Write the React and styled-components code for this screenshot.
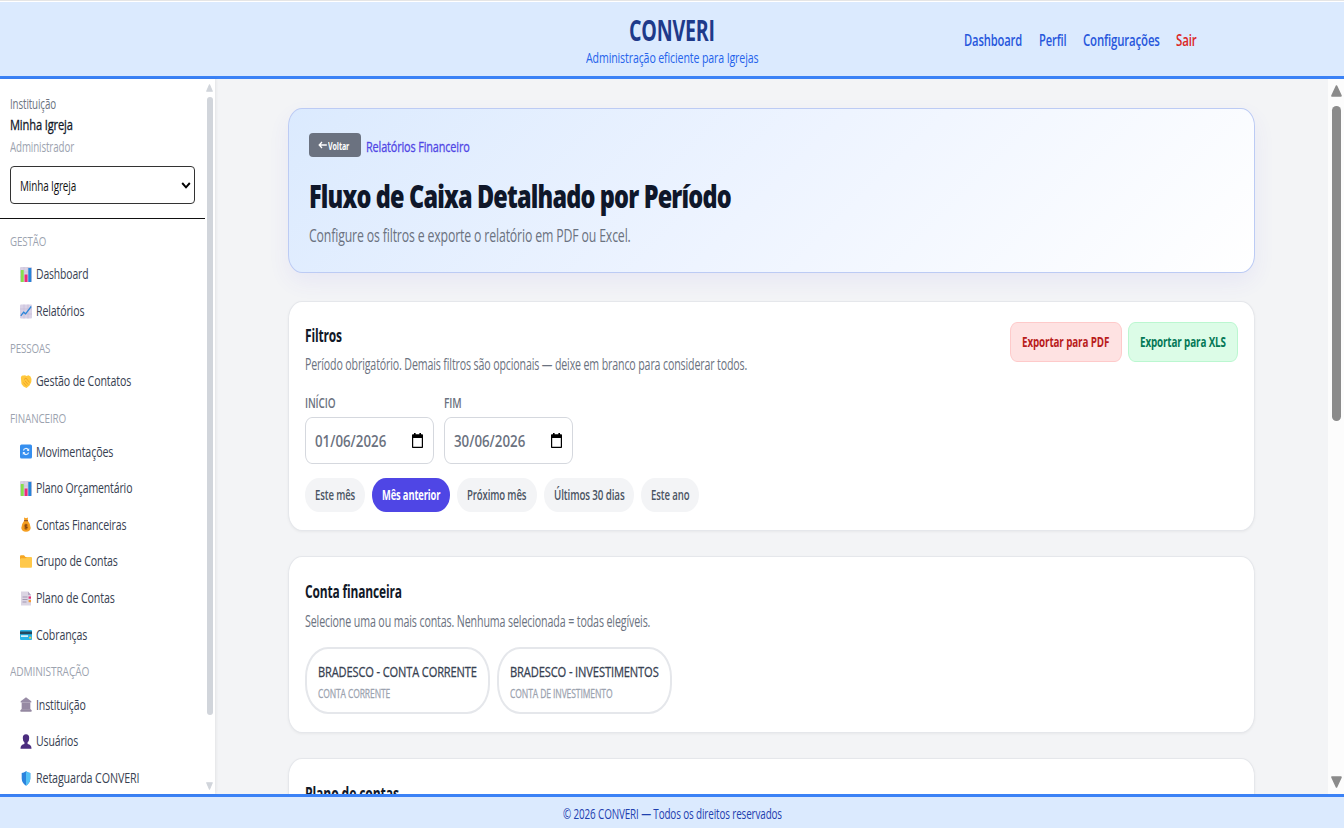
import React, { useLayoutEffect, useRef, useState } from "react";
import styled, { createGlobalStyle } from "styled-components";

const Global = createGlobalStyle`
  * { box-sizing: border-box; }
  body {
    margin: 0;
    background: #fff;
    font-family: "Open Sans", "Noto Sans", sans-serif;
    overflow: hidden;
  }
  button { font: inherit; border: 0; padding: 0; margin: 0; }
`;

/* Condensed text: the label is squeezed to the width its slot allows. */
const Slot = styled.span`
  display: block;
  flex: none;
  width: ${(p) => p.$w}px;
  height: ${(p) => p.$h}px;
  line-height: ${(p) => p.$h}px;
  font-size: ${(p) => p.$size}px;
  font-weight: ${(p) => p.$weight || 400};
  letter-spacing: ${(p) => p.$track}em;
  -webkit-text-stroke: ${(p) => (p.$weight === 500 ? "0.3px" : "0")};
  color: ${(p) => p.$color};
  white-space: nowrap;
`;
const Squeezed = styled.span`
  display: inline-block;
  transform-origin: 0 50%;
  vertical-align: top;
`;

function Label({ w, h = 20, size, weight, color, track = -0.012, children }) {
  const ref = useRef(null);
  const [scale, setScale] = useState(1);
  useLayoutEffect(() => {
    setScale(w / ref.current.offsetWidth);
  }, [w, size, weight, track]);
  return (
    <Slot $w={w} $h={h} $size={size} $weight={weight} $color={color} $track={track}>
      <Squeezed ref={ref} style={{ transform: `scaleX(${scale})` }}>{children}</Squeezed>
    </Slot>
  );
}

const Page = styled.div`
  display: flex;
  flex-direction: column;
  width: 1344px;
  height: 828px;
  border-top: 1px solid #e5e5e5;
  padding-top: 1px;
`;
const Header = styled.header`
  display: grid;
  grid-template-columns: 1fr auto 1fr;
  height: 77px;
  flex: none;
  background: #dbeafe;
  border-bottom: 3px solid #3b82f6;
`;
const Brand = styled.div`
  grid-column: 2;
  display: flex;
  flex-direction: column;
  align-items: center;
  padding-top: 11px;
`;
const TopNav = styled.nav`
  display: flex;
  gap: 16.8px;
  padding: 28px 0 0 205.5px;
`;
const Body = styled.div`
  display: flex;
  flex: 1;
  min-height: 0;
`;
const Sidebar = styled.aside`
  display: flex;
  width: 215px;
  flex: none;
  background: #fff;
  box-shadow: 1px 0 3px rgba(0, 0, 0, 0.07);
  z-index: 1;
  overflow: hidden;
`;
const SideContent = styled.div`
  width: 204.5px;
  flex: none;
`;
const Church = styled.div`
  height: 140px;
  padding: 15px 9.5px 0 9.5px;
  border-bottom: 1px solid #111;
`;
const Select = styled.div`
  display: flex;
  align-items: center;
  justify-content: space-between;
  height: 38px;
  margin-top: 8px;
  padding: 2px 3.5px 0 9.5px;
  border: 1px solid #333;
  border-radius: 4px;
`;
const Menu = styled.nav`
  padding-top: 3px;
`;
const Group = styled.section`
  padding: 5px 0 0 9.5px;
`;
const MenuItem = styled.a`
  display: flex;
  align-items: center;
  gap: 4.3px;
  height: 36.6px;
  padding: 0 0 1px 10.5px;
`;
const EmojiBox = styled.svg`
  width: 12px;
  height: 15px;
  margin-top: 2px;
  flex: none;
`;
const SideScroll = styled.div`
  display: flex;
  flex-direction: column;
  align-items: center;
  width: 10.5px;
  padding-top: 5px;
`;
const Thumb = styled.div`
  width: ${(p) => p.$w}px;
  height: ${(p) => p.$h}px;
  margin: ${(p) => p.$m};
  border-radius: 5px;
  background: ${(p) => p.$c};
  flex: none;
`;
const Main = styled.main`
  flex: 1;
  background: #f3f4f6;
  padding: 29px 73px 0;
  overflow: hidden;
`;
const MainScroll = styled.div`
  display: flex;
  flex-direction: column;
  align-items: center;
  width: 16px;
  background: #fcfcfc;
  padding-top: 6px;
`;
const Hero = styled.section`
  height: 165px;
  width: 967px;
  padding: 24px 19.5px 0;
  border: 1px solid #bccbf4;
  border-radius: 14px / 18px;
  background: linear-gradient(135deg, #dbeafe 0%, #eef4ff 50%, #ffffff 100%);
  box-shadow: 0 9px 22px rgba(79, 70, 229, 0.07);
`;
const Crumb = styled.div`
  display: flex;
  gap: 5px;
  height: 24px;
  margin-bottom: 19px;
`;
const Back = styled.button`
  width: 52.5px;
  height: 24px;
  padding: 0 0 0 9px;
  border-radius: 4px;
  background: #6b7280;
`;
const BackText = styled.span`
  display: flex;
  align-items: center;
  gap: 1px;
  height: 22px;
`;
const Card = styled.section`
  width: 967px;
  height: ${(p) => p.$h}px;
  margin-top: ${(p) => p.$mt}px;
  padding: ${(p) => p.$pt}px 16px 0 16px;
  background: #fff;
  border: 1px solid #e5e7eb;
  border-radius: 14px / 18px;
  box-shadow: 0 1px 3px rgba(0, 0, 0, 0.05);
`;
const CardHead = styled.div`
  display: flex;
  justify-content: space-between;
`;
const Titles = styled.div`
  display: flex;
  flex-direction: column;
  gap: ${(p) => p.$gap}px;
`;
const Actions = styled.div`
  display: flex;
  gap: 6.5px;
  margin-top: -3px;
`;
const ExportButton = styled.button`
  width: ${(p) => p.$w}px;
  height: 40px;
  padding: 0 0 0 11.3px;
  border: 1px solid ${(p) => p.$line};
  border-radius: 7px / 9px;
  background: ${(p) => p.$bg};
`;
const Dates = styled.div`
  display: flex;
  gap: 10.3px;
  margin-top: 19px;
`;
const DateInput = styled.div`
  display: flex;
  align-items: center;
  justify-content: space-between;
  width: 129px;
  height: 47px;
  margin-top: 4px;
  padding: 0 10px 0 8.5px;
  border: 1px solid #d5d8de;
  border-radius: 7px / 9px;
`;
const Chips = styled.div`
  display: flex;
  gap: 7.2px;
  margin-top: 14px;
`;
const Chip = styled.button`
  display: flex;
  align-items: center;
  height: 34px;
  padding: 0 9.8px;
  border-radius: 14px / 17px;
  background: ${(p) => (p.$on ? "#4f46e5" : "#f3f4f6")};
`;
const Accounts = styled.div`
  display: flex;
  gap: 6.5px;
  margin-top: 16px;
`;
const Account = styled.button`
  display: flex;
  flex-direction: column;
  height: 67px;
  width: ${(p) => p.$w}px;
  padding: 11px 0 0 11px;
  border: 2px solid #e5e7eb;
  border-radius: 23px / 30px;
  background: #fff;
`;
const Footer = styled.footer`
  display: flex;
  justify-content: center;
  height: 34px;
  flex: none;
  padding-top: 7px;
  background: #dbeafe;
  border-top: 3px solid #3b82f6;
`;

function Arrow({ down, w, h, color }) {
  return (
    <svg width={w} height={h} viewBox="0 0 10 10" preserveAspectRatio="none">
      <path
        d={down ? "M1 1H9L5 9Z" : "M1 9H9L5 1Z"}
        fill={color} stroke={color} strokeWidth="1.6" strokeLinejoin="round"
      />
    </svg>
  );
}

const Chevron = () => (
  <svg width="10" height="8" viewBox="0 0 10 8" fill="none">
    <path d="M1.2 1L5 5.3L8.8 1" stroke="#000" strokeWidth="1.9" />
  </svg>
);

const Calendar = () => (
  <svg width="11" height="15" viewBox="0 0 11 15">
    <path d="M1 1.3h1V0h1.6v1.3h3.8V0H9v1.3h1c.6 0 1 .5 1 1V14c0 .6-.4 1-1 1H1c-.6 0-1-.4-1-1V2.3c0-.5.4-1 1-1zM1.2 5v8.700h8.600V5z" fill="#000" fillRule="evenodd" />
  </svg>
);

const BackArrow = () => (
  <svg width="9" height="8" viewBox="0 0 9 8" fill="none">
    <path d="M8.8 4H1.2M4 1L1.2 4L4 7" stroke="#fff" strokeWidth="1.3" />
  </svg>
);

const emojis = {
  bars: (
    <>
      <rect width="12" height="15" rx="1" fill="#d9d1e3" />
      <path d="M0 5h12M0 10h12M4 0v15M8 0v15" stroke="#c2b8d0" strokeWidth=".5" />
      <rect x=".8" y="3" width="2.9" height="12" fill="#86e04b" />
      <rect x="4.6" y="7.5" width="2.9" height="7.5" fill="#ee2a7b" />
      <rect x="8.3" y="1" width="3" height="14" fill="#2683d8" />
    </>
  ),
  trend: (
    <>
      <rect y=".5" width="12" height="14" rx="1" fill="#d9d2e6" />
      <path d="M0 5h12M0 10h12M4 .5v14M8 .5v14" stroke="#c2b8d6" strokeWidth=".6" />
      <path d="M.8 11.8L3.6 8.2L5.6 9.8L11.2 2.5" fill="none" stroke="#2b86d9" strokeWidth="1.3" />
    </>
  ),
  hands: (
    <>
      <path d="M1 5C.4 2.5 2 .8 3.6 1.6L5 1.2L6.5 2L8.5 1.2L10.5 2.5Q12 4.5 11.3 8L9.5 11.5L6.5 14L3.5 12.5L1.5 10Z" fill="#ffc83d" />
      <path d="M4 5.5L6 4L9.5 8.5M3.5 8.5L6.5 12M5 6.8L8 10.5" fill="none" stroke="#ee9c21" strokeWidth=".8" />
    </>
  ),
  sync: (
    <>
      <rect y=".5" width="12" height="14" rx="1.5" fill="#368fef" />
      <path d="M3.5 6.5C3.8 4 7.3 3.8 8.2 6M8.5 8.5C8.2 11 4.7 11.2 3.8 9" fill="none" stroke="#e8f3ff" strokeWidth="1.2" />
      <path d="M9.2 4v3H6.7zM2.8 11V8H5.3z" fill="#e8f3ff" />
    </>
  ),
  money: (
    <>
      <path d="M4.3 3.5L4 .5L6 1.2L8 .5L7.7 3.5Q10.8 7.5 10.7 11Q10.3 14.7 6 14.7Q1.7 14.7 1.3 11Q1.2 7.5 4.3 3.5Z" fill="#f59f22" />
      <path d="M4 3.7H8" stroke="#8a4b20" strokeWidth="1" />
      <ellipse cx="6" cy="9.7" rx="2.3" ry="3.2" fill="#d98315" />
      <path d="M7.1 8.2Q4.9 7.4 5 8.9T7 10.3T4.8 11.2M6 7v5.5" stroke="#6d3813" strokeWidth=".7" fill="none" />
    </>
  ),
  folder: (
    <>
      <path d="M0 2.5Q0 1.3 1 1.3H4L5.5 3H9.5Q10.5 3 10.5 4V13H1Q0 13 0 12Z" fill="#f5a623" />
      <path d="M1 4.3H5.5L7 3H11Q12 3 12 4V12.5Q12 13.8 11 13.8H1Q0 13.8 0 12.8V5.3Z" fill="#ffc84a" />
    </>
  ),
  pages: (
    <>
      <path d="M1 .5H8L11 4V14.5H1Z" fill="#dbd5e3" />
      <path d="M8 .5V4H11Z" fill="#b5a9c3" />
      <path d="M2.5 6h5M2.5 8.5h5M2.5 11h4" stroke="#978aa7" strokeWidth=".8" />
      <rect x="8.6" y="5.5" width="2.4" height="2.2" fill="#e52f76" />
      <rect x="8.6" y="9" width="2.4" height="2.2" fill="#f79b37" />
    </>
  ),
  card: (
    <>
      <rect y="3" width="12" height="10" rx="1" fill="#29b5e8" />
      <rect y="4.5" width="12" height="2.7" fill="#24495f" />
      <rect x="1" y="8.3" width="7" height="1.6" fill="#e9f7fb" />
      <rect x="9.2" y="9.8" width="2" height="1.8" fill="#f7c948" />
    </>
  ),
  bank: (
    <>
      <path d="M.7 4.2L6 .3L11.3 4.2V5.5H.7Z" fill="#988ca6" />
      <path d="M1.5 5.5h9V12.5h-9z" fill="#b9afc3" />
      <path d="M3 5.5v7M5 5.5v7M7 5.5v7M9 5.5v7" stroke="#6e5c7d" strokeWidth=".9" />
      <path d="M1.2 12.3h9.6l.7 1V14.8H.5V13.3z" fill="#9488a1" />
    </>
  ),
  user: (
    <path d="M2.8 4Q2.8 .3 6 .3T9.2 4Q9.2 7.2 7.6 8.3V10Q11.5 10.6 11.5 14.7H.5Q.5 10.6 4.4 10V8.3Q2.8 7.2 2.8 4Z" fill="#4b2d7f" />
  ),
  shield: (
    <>
      <path d="M6 .3Q8.3 1.8 10.3 2V7.5Q10.2 12 6 14.7Q1.8 12 1.7 7.5V2Q3.7 1.8 6 .3Z" fill="#2b83dd" />
      <path d="M6 .3Q8.3 1.8 10.3 2V7.5Q10.2 12 6 14.7Z" fill="#54c1f5" />
    </>
  ),
};

const Emoji = ({ name }) => <EmojiBox viewBox="0 0 12 15">{emojis[name]}</EmojiBox>;

const groups = [
  ["GESTÃO", 36, [["bars", "Dashboard", 52.5], ["trend", "Relatórios", 48]]],
  ["PESSOAS", 40.5, [["hands", "Gestão de Contatos", 95]]],
  ["FINANCEIRO", 56.5, [
    ["sync", "Movimentações", 77],
    ["bars", "Plano Orçamentário", 96],
    ["money", "Contas Financeiras", 90],
    ["folder", "Grupo de Contas", 82],
    ["pages", "Plano de Contas", 79],
    ["card", "Cobranças", 51],
  ]],
  ["ADMINISTRAÇÃO", 79, [
    ["bank", "Instituição", 50],
    ["user", "Usuários", 42],
    ["shield", "Retaguarda CONVERI", 103],
  ]],
];

const chips = [
  ["Este mês", 40.3],
  ["Mês anterior", 58.6, true],
  ["Próximo mês", 59.6],
  ["Últimos 30 dias", 70.4],
  ["Este ano", 38.3],
];

export default function App() {
  return (
    <Page>
      <Global />
      <Header>
        <Brand>
          <Label w={86} h={34} size={29} weight={700} color="#1e3a8a">CONVERI</Label>
          <Label w={172.5} h={21} size={15.2} color="#2563eb">Administração eficiente para Igrejas</Label>
        </Brand>
        <TopNav>
          <Label w={58} size={16.2} weight={600} color="#2757dc">Dashboard</Label>
          <Label w={27.5} size={16.2} weight={600} color="#2757dc">Perfil</Label>
          <Label w={76.7} size={16.2} weight={600} color="#2757dc">Configurações</Label>
          <Label w={20.5} size={16.2} weight={600} color="#dc2626">Sair</Label>
        </TopNav>
      </Header>
      <Body>
        <Sidebar>
          <SideContent>
            <Church>
              <Label w={46} size={13.6} color="#6b7280">Instituição</Label>
              <Label w={63} h={21} size={15} weight={500} color="#111827">Minha Igreja</Label>
              <Label w={64} h={23} size={13.6} color="#9ca3af">Administrador</Label>
              <Select>
                <Label w={56} size={14.2} color="#111">Minha Igreja</Label>
                <Chevron />
              </Select>
            </Church>
            <Menu>
              {groups.map(([title, w, items]) => (
                <Group key={title}>
                  <Label w={w} h={28.7} size={13.5} color="#9ca3af">{title}</Label>
                  {items.map(([icon, text, tw]) => (
                    <MenuItem key={text}>
                      <Emoji name={icon} />
                      <Label w={tw} size={15} color="#374151">{text}</Label>
                    </MenuItem>
                  ))}
                </Group>
              ))}
            </Menu>
          </SideContent>
          <SideScroll>
            <Arrow w={7} h={8} color="#d1d5db" />
            <Thumb $w={6.5} $h={618} $m="5px 0 67px" $c="#d1d5db" />
            <Arrow down w={7} h={8} color="#d1d5db" />
          </SideScroll>
        </Sidebar>
        <Main>
          <Hero>
            <Crumb>
              <Back>
                <BackText>
                  <BackArrow />
                  <Label w={21} h={21} size={10.8} weight={700} color="#fff">Voltar</Label>
                </BackText>
              </Back>
              <Label w={103.5} h={27} size={15} weight={500} color="#4f46e5">Relatórios Financeiro</Label>
            </Crumb>
            <Label w={422} h={40} size={32.5} weight={800} track={-0.035} color="#0f172a">Fluxo de Caixa Detalhado por Período</Label>
            <Label w={321.5} h={39} size={18} color="#6b7280">Configure os filtros e exporte o relatório em PDF ou Excel.</Label>
          </Hero>
          <Card $h={230} $mt={28} $pt={23}>
            <CardHead>
              <Titles $gap={9}>
                <Label w={37} size={17.5} weight={700} color="#111827">Filtros</Label>
                <Label w={442} size={15.8} color="#6b7280">Período obrigatório. Demais filtros são opcionais — deixe em branco para considerar todos.</Label>
              </Titles>
              <Actions>
                <ExportButton $w={111.5} $bg="#fee2e2" $line="#fecaca">
                  <Label w={87} size={13.8} weight={700} color="#b91c1c">Exportar para PDF</Label>
                </ExportButton>
                <ExportButton $w={110} $bg="#dcfce7" $line="#bbf7d0">
                  <Label w={85.5} size={13.8} weight={700} color="#047857">Exportar para XLS</Label>
                </ExportButton>
              </Actions>
            </CardHead>
            <Dates>
              <div>
                <Label w={30.5} size={13.4} weight={600} color="#6b7280">INÍCIO</Label>
                <DateInput><Label w={71.5} size={16.2} weight={600} track={0} color="#6b7280">01/06/2026</Label><Calendar /></DateInput>
              </div>
              <div>
                <Label w={17.5} size={13.4} weight={600} color="#6b7280">FIM</Label>
                <DateInput><Label w={71.5} size={16.2} weight={600} track={0} color="#6b7280">30/06/2026</Label><Calendar /></DateInput>
              </div>
            </Dates>
            <Chips>
              {chips.map(([text, w, on]) => (
                <Chip key={text} $on={on}>
                  <Label w={w} size={13.5} weight={on ? 700 : 600} color={on ? "#fff" : "#4b5563"}>{text}</Label>
                </Chip>
              ))}
            </Chips>
          </Card>
          <Card $h={177} $mt={25} $pt={24}>
            <Titles $gap={10}>
              <Label w={97} size={17.5} weight={700} color="#111827">Conta financeira</Label>
              <Label w={345} size={15.8} color="#6b7280">Selecione uma ou mais contas. Nenhuma selecionada = todas elegíveis.</Label>
            </Titles>
            <Accounts>
              <Account $w={185}>
                <Label w={159} h={22} size={15.2} weight={500} color="#374151">BRADESCO - CONTA CORRENTE</Label>
                <Label w={72} h={23} size={12.5} weight={500} color="#9ca3af">CONTA CORRENTE</Label>
              </Account>
              <Account $w={175.5}>
                <Label w={149} h={22} size={15.2} weight={500} color="#374151">BRADESCO - INVESTIMENTOS</Label>
                <Label w={102.5} h={23} size={12.5} weight={500} color="#9ca3af">CONTA DE INVESTIMENTO</Label>
              </Account>
            </Accounts>
          </Card>
          <Card $h={177} $mt={25} $pt={24}>
            <Label w={94} size={17.5} weight={700} color="#111827">Plano de contas</Label>
          </Card>
        </Main>
        <MainScroll>
          <Arrow w={11} h={12} color="#8b8b8b" />
          <Thumb $w={9} $h={315} $m="9px 0 355px" $c="#8b8b8b" />
          <Arrow down w={11} h={12} color="#8b8b8b" />
        </MainScroll>
      </Body>
      <Footer>
        <Label w={219} size={13.6} color="#1e40af">© 2026 CONVERI — Todos os direitos reservados</Label>
      </Footer>
    </Page>
  );
}
